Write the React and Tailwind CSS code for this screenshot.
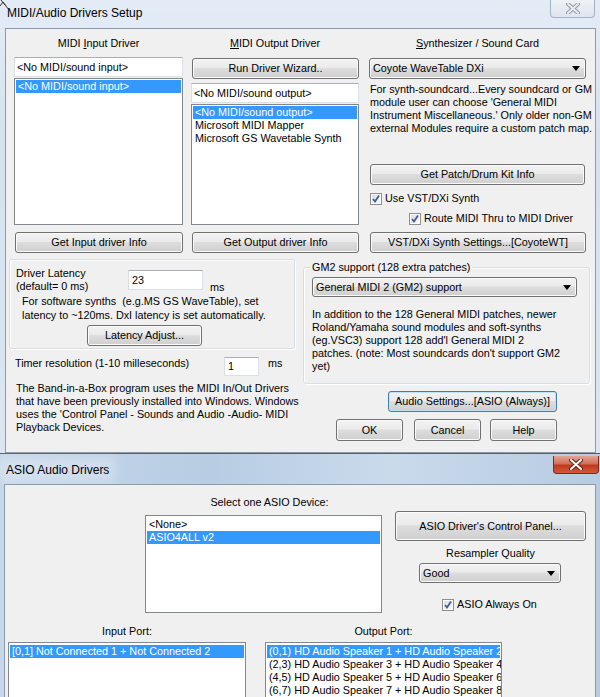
import React from 'react';

const Btn = ({ className = '', focus = false, children }) => (
    <div
        className={`flex items-center justify-center rounded-[3px] border bg-[linear-gradient(#f2f2f2,#ebebeb_45%,#dddddd_50%,#cfcfcf)] ${
            focus
                ? 'border-[#3c7fb1] shadow-[inset_0_0_0_1px_#bfe3f7]'
                : 'border-[#707070] shadow-[inset_0_0_0_1px_#fbfbfb]'
        } ${className}`}
    >
        {children}
    </div>
);

const TextBox = ({ className = '', children }) => (
    <div className={`flex items-center bg-white border border-[#dbdfe6] border-t-[#abadb3] pl-[2px] ${className}`}>
        {children}
    </div>
);

const Combo = ({ className = '', children }) => (
    <div className={`flex items-center justify-between rounded-[3px] border border-[#707070] shadow-[inset_0_0_0_1px_#fbfbfb] bg-[linear-gradient(#f2f2f2,#ebebeb_45%,#dddddd_50%,#cfcfcf)] pl-[3px] pr-[5px] ${className}`}>
        <span>{children}</span>
        <svg width="8" height="5" viewBox="0 0 8 5">
            <path d="M0 0 H8 L4 5 Z" fill="#000" />
        </svg>
    </div>
);

const ListBox = ({ className = '', items, selected = 0 }) => (
    <div className={`bg-white border border-[#828790] p-[1px] overflow-hidden ${className}`}>
        {items.map((item, i) => (
            <div
                key={i}
                className={`h-[13px] pl-[2px] whitespace-nowrap ${i === selected ? 'bg-[#3399ff] text-white' : ''}`}
            >
                {item}
            </div>
        ))}
    </div>
);

const Check = ({ className = '', children }) => (
    <div className={`flex items-center h-[13px] ${className}`}>
        <svg width="12" height="12" viewBox="0 0 12 12">
            <defs>
                <linearGradient id="cb" x1="0" y1="0" x2="1" y2="1">
                    <stop offset="0" stopColor="#dcdcdc" />
                    <stop offset="1" stopColor="#fbfbfb" />
                </linearGradient>
            </defs>
            <rect x="0.5" y="0.5" width="11" height="11" fill="#fff" stroke="#8e8f8f" />
            <rect x="2" y="2" width="8" height="8" fill="url(#cb)" />
            <path d="M3 6 L5 8.5 L9 2.5" fill="none" stroke="#3e5da5" strokeWidth="1.8" />
        </svg>
        <span className="ml-[3px]">{children}</span>
    </div>
);

const CloseX = ({ color, stroke }) => (
    <svg width="14" height="11" viewBox="0 0 14 11">
        <path d="M2 1 L12 10 M12 1 L2 10" stroke={stroke} strokeWidth="4" strokeLinecap="round" />
        <path d="M2 1 L12 10 M12 1 L2 10" stroke={color} strokeWidth="2" strokeLinecap="round" />
    </svg>
);

const App = () => {
    return (
        <div className="relative w-[600px] h-[697px] overflow-hidden bg-[#cfdcea] font-['Liberation_Sans',Arial,sans-serif] text-[10.8px] leading-[13px] text-black">
            {/* stray mouse pointer in the corner */}
            <svg className="absolute left-0 top-0" width="12" height="14" viewBox="0 0 12 14">
                <path d="M1 0 L10 11 M0 6 L3 2 L6 6" fill="none" stroke="#333" strokeWidth="1" />
            </svg>

            {/* MIDI/Audio Drivers Setup window (inactive) */}
            <div className="h-[453px] flex flex-col pl-[5px] pr-[4px] bg-[linear-gradient(180deg,#e4ecf6,#d5e2f0_30%,#dbe6f2)]">
                <div className="h-[28px] flex items-start justify-between shrink-0">
                    <span className="mt-[6px] ml-[2px] text-[12px] leading-[14px]">MIDI/Audio Drivers Setup</span>
                    <div className="mr-[1px] w-[45px] h-[18px] flex items-center justify-center rounded-b-[4px] border border-t-0 border-[#a5b2c1] bg-[linear-gradient(#eef2f7,#dde5ee)]">
                        <CloseX color="#e9edf2" stroke="#8e9aa8" />
                    </div>
                </div>
                <div className="flex-1 border border-[#8c9bab] bg-[#f0f0f0] pl-[3px] pt-[8px]">
                    {/* drivers */}
                    <div className="flex ml-[5px]">
                        <div className="w-[169px]">
                            <div className="h-[13px] text-center">
                                MIDI <span className="underline">I</span>nput Driver
                            </div>
                            <TextBox className="mt-[7px] h-[20px]">&lt;No MIDI/sound input&gt;</TextBox>
                            <ListBox className="mt-[1px] h-[147px]" items={['<No MIDI/sound input>']} />
                        </div>
                        <div className="w-[168px] ml-[8px]">
                            <div className="h-[13px] text-center">
                                <span className="underline">M</span>IDI Output Driver
                            </div>
                            <Btn className="mt-[8px] h-[21px] ml-[1px]">Run Driver Wizard..</Btn>
                            <TextBox className="mt-[4px] h-[20px]">&lt;No MIDI/sound output&gt;</TextBox>
                            <ListBox
                                className="mt-[1px] h-[121px]"
                                items={['<No MIDI/sound output>', 'Microsoft MIDI Mapper', 'Microsoft GS Wavetable Synth']}
                            />
                        </div>
                        <div className="w-[217px] ml-[10px]">
                            <div className="h-[13px] text-center">
                                <span className="underline">S</span>ynthesizer / Sound Card
                            </div>
                            <Combo className="mt-[8px] h-[21px]">Coyote WaveTable DXi</Combo>
                            <p className="mt-[4px] pl-[1px] whitespace-nowrap">
                                For synth-soundcard...Every soundcard or GM
                                <br />
                                module user can choose 'General MIDI
                                <br />
                                Instrument Miscellaneous.' Only older non-GM
                                <br />
                                external Modules require a custom patch map.
                            </p>
                            <Btn className="mt-[29px] ml-[1px] w-[215px] h-[21px]">Get Patch/Drum Kit Info</Btn>
                            <Check className="mt-[7px] ml-[1px]">Use VST/DXi Synth</Check>
                            <Check className="mt-[7px] ml-[40px]">Route MIDI Thru to MIDI Driver</Check>
                        </div>
                    </div>

                    <div className="flex mt-[7px] ml-[5px]">
                        <Btn className="ml-[1px] w-[168px] h-[21px]">Get Input driver Info</Btn>
                        <Btn className="ml-[9px] w-[167px] h-[21px]">Get Output driver Info</Btn>
                        <Btn className="ml-[11px] w-[216px] h-[21px]">VST/DXi Synth Settings...[CoyoteWT]</Btn>
                    </div>

                    {/* latency + GM2 */}
                    <div className="flex mt-[6px]">
                        <div className="w-[286px]">
                            <div className="border border-[#d5dfe5] rounded-[3px] shadow-[inset_1px_1px_0_#fff,1px_1px_0_#fff] pb-[2px]">
                                <div className="flex pl-[6px]">
                                    <div className="w-[112px] pt-[7px]">
                                        Driver Latency
                                        <br />
                                        (default= 0 ms)
                                    </div>
                                    <TextBox className="mt-[10px] w-[75px] h-[20px] pl-[3px]">23</TextBox>
                                    <span className="ml-[7px] mt-[21px]">ms</span>
                                </div>
                                <p className="pl-[12px] leading-[14px] whitespace-nowrap">
                                    For software synths&nbsp; (e.g.MS GS WaveTable), set
                                    <br />
                                    latency to ~120ms. DxI latency is set automatically.
                                </p>
                                <Btn className="mt-[3px] ml-[77px] w-[115px] h-[21px]">Latency Adjust...</Btn>
                            </div>
                            <div className="flex mt-[8px] pl-[6px]">
                                <span className="w-[209px]">Timer resolution (1-10 milleseconds)</span>
                                <TextBox className="w-[35px] h-[19px] pl-[3px]">1</TextBox>
                                <span className="ml-[9px]">ms</span>
                            </div>
                            <p className="mt-[6px] pl-[7px] whitespace-nowrap">
                                The Band-in-a-Box program uses the MIDI In/Out Drivers
                                <br />
                                that have been previously installed into Windows. Windows
                                <br />
                                uses the 'Control Panel - Sounds and Audio -Audio- MIDI
                                <br />
                                Playback Devices.
                            </p>
                        </div>

                        <div className="w-[287px] ml-[8px]">
                            <div className="relative mt-[8px] h-[117px] border border-[#d5dfe5] rounded-[3px] shadow-[inset_1px_1px_0_#fff,1px_1px_0_#fff]">
                                <span className="absolute -top-[7px] left-[6px] px-[2px] bg-[#f0f0f0]">
                                    GM2 support (128 extra patches)
                                </span>
                                <Combo className="mt-[9px] ml-[8px] w-[265px] h-[20px]">General MIDI 2 (GM2) support</Combo>
                                <p className="mt-[11px] pl-[8px] whitespace-nowrap">
                                    In addition to the 128 General MIDI patches, newer
                                    <br />
                                    Roland/Yamaha sound modules and soft-synths
                                    <br />
                                    (eg.VSC3) support 128 add'l General MIDI 2
                                    <br />
                                    patches. (note: Most soundcards don't support GM2
                                    <br />
                                    yet)
                                </p>
                            </div>
                            <Btn focus className="mt-[7px] ml-[85px] w-[169px] h-[21px]">Audio Settings...[ASIO (Always)]</Btn>
                            <div className="flex mt-[7px]">
                                <Btn className="ml-[33px] w-[67px] h-[22px]">OK</Btn>
                                <Btn className="ml-[11px] w-[67px] h-[22px]">Cancel</Btn>
                                <Btn className="ml-[9px] w-[67px] h-[22px]">Help</Btn>
                            </div>
                        </div>
                    </div>
                </div>
            </div>

            {/* ASIO Audio Drivers window (active) */}
            <div className="h-[244px] flex flex-col border-t border-[#55606c] pl-[4px] pr-[4px] bg-[linear-gradient(90deg,#c6d7e9,#b8cde3_35%,#c9daeb_65%,#b7cbe1)]">
                <div className="h-[30px] flex items-start justify-between shrink-0">
                    <span className="mt-[9px] ml-[1px] px-[1px] text-[12px] leading-[14px] bg-white/25 shadow-[0_0_8px_6px_rgba(255,255,255,0.25)]">
                        ASIO Audio Drivers
                    </span>
                    <div className="-mr-[3px] mt-[2px] w-[46px] h-[18px] flex items-center justify-center rounded-b-[4px] border border-t-0 border-[#7a2a20] bg-[linear-gradient(#e4a593,#d1705a_45%,#c1391f_55%,#d1583b)]">
                        <CloseX color="#ffffff" stroke="#5a2418" />
                    </div>
                </div>
                <div className="flex-1 border border-[#8c9bab] bg-[#f0f0f0]">
                    <div className="flex mt-[11px]">
                        <div className="ml-[140px] w-[237px]">
                            <div className="h-[13px] text-center pl-[12px]">Select one ASIO Device:</div>
                            <ListBox className="mt-[6px] h-[98px] pt-[2px]" items={['<None>', 'ASIO4ALL v2']} selected={1} />
                        </div>
                        <div className="ml-[13px] w-[191px]">
                            <Btn className="mt-[15px] h-[30px]">ASIO Driver's Control Panel...</Btn>
                            <div className="mt-[6px] h-[13px] text-center">Resampler Quality</div>
                            <Combo className="mt-[3px] ml-[24px] w-[142px] h-[20px]">Good</Combo>
                            <Check className="mt-[15px] ml-[47px]">ASIO Always On</Check>
                        </div>
                    </div>
                    <div className="flex mt-[12px]">
                        <div className="ml-[3px] w-[238px]">
                            <div className="h-[13px] text-center">Input Port:</div>
                            <ListBox
                                className="mt-[4px] h-[70px] pt-[2px]"
                                items={['[0,1] Not Connected 1 + Not Connected 2']}
                            />
                        </div>
                        <div className="ml-[19px] w-[237px]">
                            <div className="h-[13px] text-center">Output Port:</div>
                            <ListBox
                                className="mt-[4px] h-[70px] pt-[2px]"
                                items={[
                                    '(0,1) HD Audio Speaker 1 + HD Audio Speaker 2',
                                    '(2,3) HD Audio Speaker 3 + HD Audio Speaker 4',
                                    '(4,5) HD Audio Speaker 5 + HD Audio Speaker 6',
                                    '(6,7) HD Audio Speaker 7 + HD Audio Speaker 8',
                                ]}
                            />
                        </div>
                    </div>
                </div>
            </div>
        </div>
    );
};

export default App;
